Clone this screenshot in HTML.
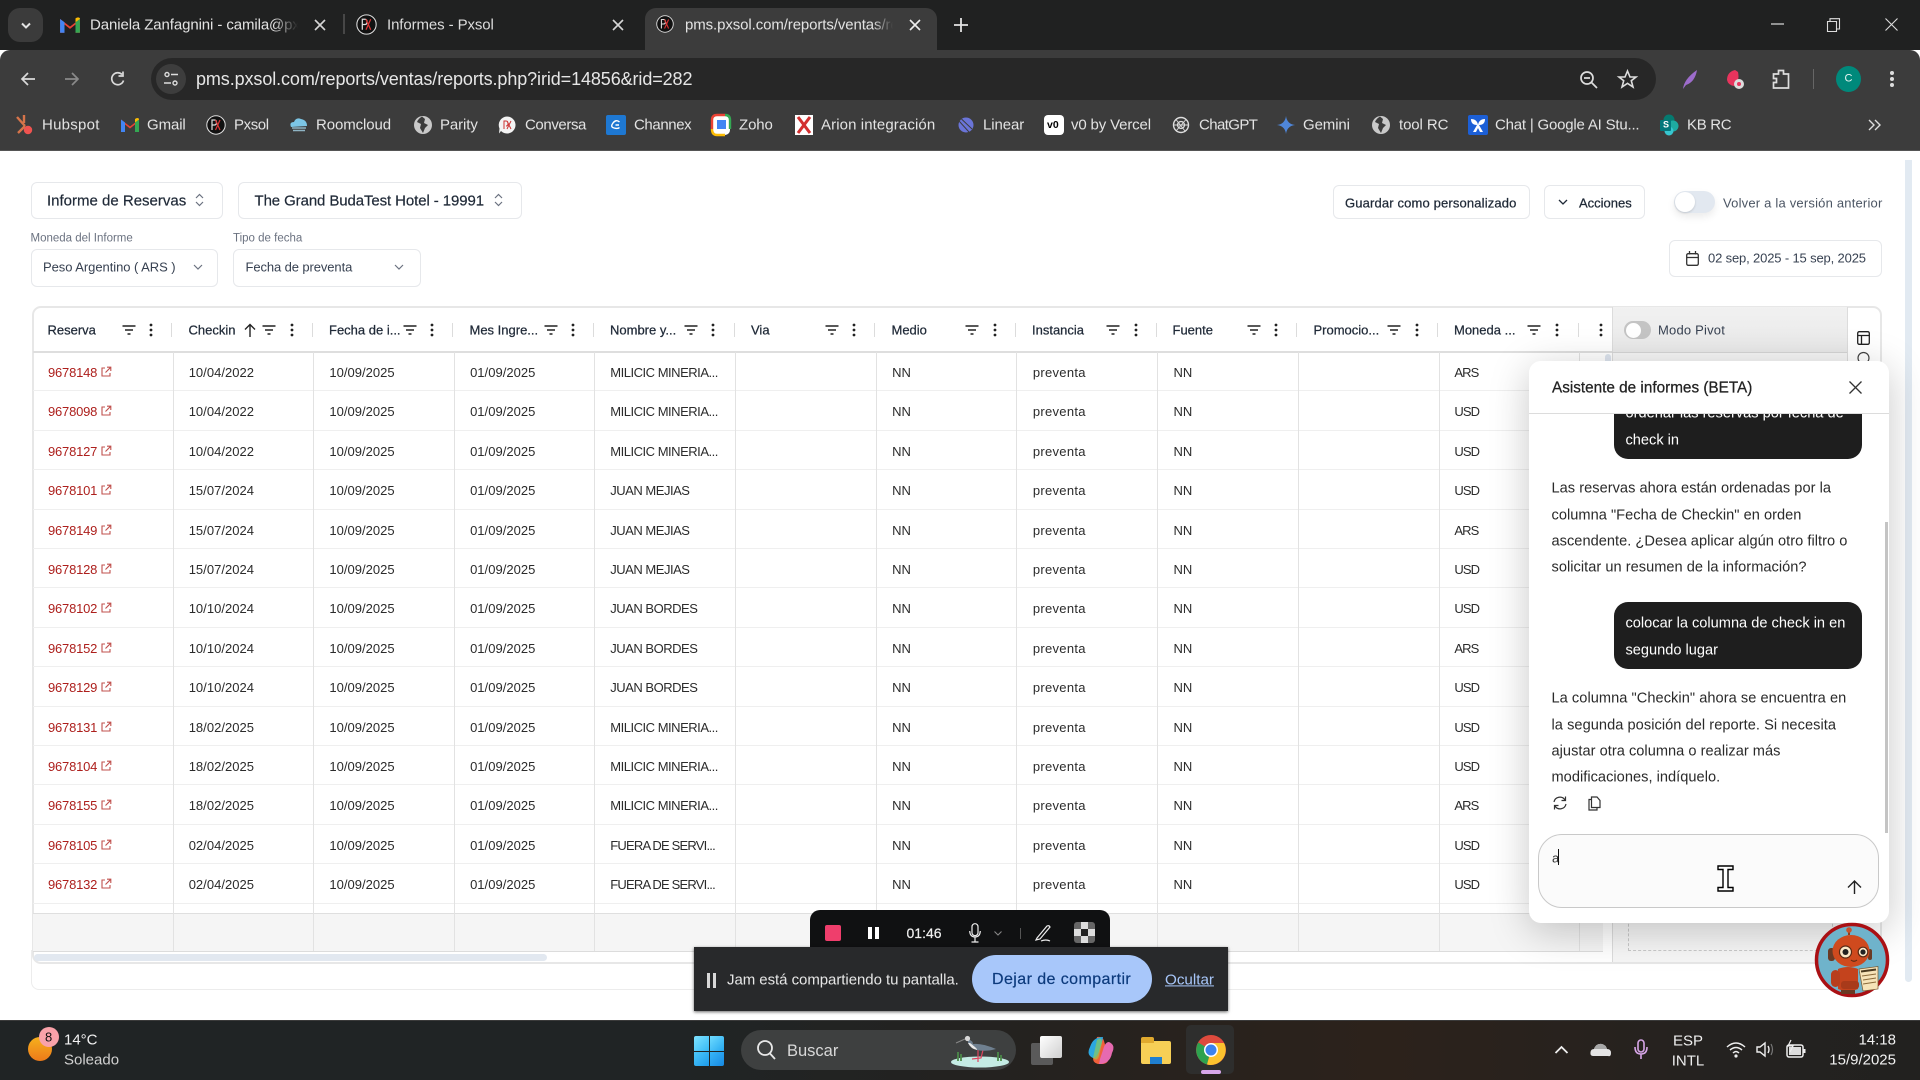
<!DOCTYPE html>
<html lang="es"><head><meta charset="utf-8"><title>pms.pxsol.com</title>
<style>
*{box-sizing:border-box}
html,body{margin:0;padding:0;width:1920px;height:1080px;overflow:hidden;background:#fff;font-family:"Liberation Sans",sans-serif}
.a{position:absolute}
.t{position:absolute;white-space:nowrap;line-height:1;transform:translateY(-50%)}
.g{color:#e3e3e3;font-size:15px;letter-spacing:-.1px}
svg{position:absolute;overflow:visible}
.box{position:absolute;background:#fff;border:1px solid #e6e8eb;border-radius:6px}
.r{position:absolute;left:33px;width:1570px;height:39.4px;border-bottom:1px solid #efefef;display:grid;grid-template-columns:repeat(11,140.7px);font-size:13px;color:#2b2b2b;line-height:41px;letter-spacing:.02px}
.r span{padding-left:15px;white-space:nowrap;overflow:hidden;display:block;position:relative}
.r span:first-child{color:#ad1f1c;letter-spacing:-.2px}
.r span:first-child svg{left:67px;top:14px}
.r span:nth-child(5){letter-spacing:-.48px;padding-left:14.5px}
.r span:nth-child(8){letter-spacing:.3px}
.r span:nth-child(11){letter-spacing:-.9px;padding-left:14.5px}
.v{position:absolute;top:352px;width:1px;height:599px;background:#e2e2e2}
.h{font-size:13px;color:#1f2937;top:330px;-webkit-text-stroke:.25px #1f2937}
.sep{position:absolute;top:323px;width:1px;height:14px;background:#dcdcdc}
.m{font-size:14.6px;color:#2a2a2a;left:1551.5px;letter-spacing:.03px}
.w{font-size:14.6px;color:#fff;left:1625.5px}
</style></head><body>
<svg width="0" height="0" style="position:absolute"><defs>
<symbol id="f" viewBox="0 0 14 10"><path d="M0.5 1H13.5M3 5H11M5.5 9H8.5" stroke="#222" stroke-width="1.4" fill="none"/></symbol>
<symbol id="d" viewBox="0 0 4 14"><circle cx="2" cy="2" r="1.4" fill="#222"/><circle cx="2" cy="7" r="1.4" fill="#222"/><circle cx="2" cy="12" r="1.4" fill="#222"/></symbol>
<symbol id="x" viewBox="0 0 12 12"><path d="M5 2H2V10H10V7M7 1.2H10.8V5M10.8 1.2L5.5 6.5" stroke="#c0504d" stroke-width="1.1" fill="none"/></symbol>
<symbol id="px" viewBox="0 0 20 20"><circle cx="10" cy="10" r="9.2" fill="#111" stroke="#ddd" stroke-width="1"/><path d="M6 15V5H8.5Q10.5 5 10.5 7.5T8.5 10H6" stroke="#ddd" fill="none" stroke-width="1.2"/><path d="M9.5 5L14 15M14 5L9.5 15" stroke="#d33" stroke-width="1.2"/></symbol>
<symbol id="gm" viewBox="0 0 20 16"><path d="M1 15V2.5L10 9.5L19 2.5V15H15V7.5L10 11.5L5 7.5V15Z" fill="#ea4335"/><path d="M1 15V2.5L5 5.5V15Z" fill="#4285f4"/><path d="M19 15V2.5L15 5.5V15Z" fill="#34a853"/><path d="M15 5.5L19 2.5V1.8Q17.5.2 15 2Z" fill="#fbbc04"/></symbol>
<symbol id="gl" viewBox="0 0 20 20"><circle cx="10" cy="10" r="9" fill="#c9c9c9"/><path d="M9 1.5Q5 4 4 7L8 9L7 13L10 18L12 13L15 10L11 8L12 4Z" fill="#3c3c3c"/></symbol>
</defs></svg>

<!-- Title bar -->
<div class="a" style="left:0;top:0;width:1920px;height:50px;background:#202121"></div>
<div class="a" style="left:8px;top:8px;width:35px;height:34px;border-radius:12px;background:#3b3b3b"></div>
<svg style="left:20px;top:22px" width="12" height="8"><path d="M2 1.5L6 5.5L10 1.5" stroke="#e3e3e3" stroke-width="2" fill="none"/></svg>
<svg style="left:59px;top:16px" width="22" height="18"><use href="#gm" width="22" height="18"/></svg>
<div class="t g" style="left:90px;top:25px;width:208px;overflow:hidden;-webkit-mask-image:linear-gradient(90deg,#000 88%,transparent)">Daniela Zanfagnini - camila@pxsol.com</div>
<svg style="left:314px;top:19px" width="12" height="12"><path d="M1 1L11 11M11 1L1 11" stroke="#d6d6d6" stroke-width="1.6"/></svg>
<div class="a" style="left:343px;top:14px;width:2px;height:20px;background:#474747"></div>
<svg style="left:356px;top:14px" width="21" height="21"><use href="#px" width="21" height="21"/></svg>
<div class="t g" style="left:387px;top:25px;color:#dcdcdc">Informes - Pxsol</div>
<svg style="left:612px;top:19px" width="12" height="12"><path d="M1 1L11 11M11 1L1 11" stroke="#d6d6d6" stroke-width="1.6"/></svg>
<div class="a" style="left:645px;top:8px;width:292px;height:42px;background:#3c3c3c;border-radius:11px 11px 0 0"></div>
<svg style="left:656px;top:15px" width="18" height="18"><use href="#px" width="18" height="18"/></svg>
<div class="t g" style="left:685px;top:25px;width:208px;overflow:hidden;-webkit-mask-image:linear-gradient(90deg,#000 90%,transparent)">pms.pxsol.com/reports/ventas/reports</div>
<svg style="left:909px;top:19px" width="12" height="12"><path d="M1 1L11 11M11 1L1 11" stroke="#eee" stroke-width="1.6"/></svg>
<svg style="left:954px;top:18px" width="14" height="14"><path d="M7 0V14M0 7H14" stroke="#e3e3e3" stroke-width="1.8"/></svg>
<svg style="left:1771px;top:23px" width="13" height="2"><path d="M0 1H13" stroke="#ddd" stroke-width="1.2"/></svg>
<svg style="left:1827px;top:18px" width="13" height="14"><path d="M.5 3.5H9.5V13.5H.5ZM3 3V.7H12.5V11H10" stroke="#ddd" fill="none" stroke-width="1.1"/></svg>
<svg style="left:1885px;top:18px" width="13" height="13"><path d="M.5.5L12.5 12.5M12.5.5L.5 12.5" stroke="#ddd" stroke-width="1.1"/></svg>

<!-- Toolbar -->
<div class="a" style="left:0;top:50px;width:1920px;height:101px;background:#3c3c3c;border-radius:10px 10px 0 0"></div>
<div class="a" style="left:0;top:150px;width:1920px;height:1px;background:#555"></div>
<svg style="left:20px;top:71px" width="16" height="16"><path d="M15 8H2M8 2L2 8L8 14" stroke="#d9d9d9" stroke-width="1.7" fill="none"/></svg>
<svg style="left:64px;top:71px" width="16" height="16"><path d="M1 8H14M8 2L14 8L8 14" stroke="#8a8a8a" stroke-width="1.7" fill="none"/></svg>
<svg style="left:110px;top:71px" width="16" height="16"><path d="M13.5 9.5A6 6 0 1 1 12 3.5M13 .5V5H8.5" stroke="#d9d9d9" stroke-width="1.7" fill="none"/></svg>
<div class="a" style="left:151px;top:58px;width:1505px;height:42px;background:#272727;border-radius:21px"></div>
<div class="a" style="left:156px;top:64px;width:30px;height:30px;background:#3d3d3d;border-radius:15px"></div>
<svg style="left:163px;top:71px" width="16" height="16"><circle cx="4" cy="3.5" r="2" fill="none" stroke="#ddd" stroke-width="1.4"/><circle cx="12" cy="12" r="2" fill="none" stroke="#ddd" stroke-width="1.4"/><path d="M8 3.5H15M1 12H8" stroke="#ddd" stroke-width="1.4"/></svg>
<div class="t" style="left:196px;top:79px;font-size:18px;color:#e6e6e6;letter-spacing:-.1px">pms.pxsol.com/reports/ventas/reports.php?irid=14856&amp;rid=282</div>
<svg style="left:1579px;top:70px" width="20" height="20"><circle cx="8" cy="8" r="6" fill="none" stroke="#ddd" stroke-width="1.7"/><path d="M12.5 12.5L18 18M5 8H11" stroke="#ddd" stroke-width="1.7"/></svg>
<svg style="left:1618px;top:70px" width="19" height="18"><path d="M9.5 1L12 7H18L13.3 10.7L15 17L9.5 13.3L4 17L5.7 10.7L1 7H7Z" stroke="#ddd" stroke-width="1.6" fill="none"/></svg>
<svg style="left:1682px;top:69px" width="16" height="21"><path d="M1 20Q2 10 15 1Q13 13 4 16Z" fill="#9d6ccb"/></svg>
<svg style="left:1726px;top:69px" width="20" height="22"><path d="M9 1Q1 3 1 11Q2 16 8 17Q14 12 12 3Z" fill="#e8345d"/><circle cx="13" cy="15" r="5" fill="#ddd"/><circle cx="13" cy="15" r="2" fill="#e8345d"/></svg>
<svg style="left:1772px;top:69px" width="19" height="21"><path d="M1.5 5H6.5V1.5H11.5V5H16.5V19H1.5V13.5H4.5V9.5H1.5Z" fill="none" stroke="#ddd" stroke-width="1.7"/></svg>
<div class="a" style="left:1813px;top:69px;width:1px;height:20px;background:#666"></div>
<div class="a" style="left:1836px;top:66px;width:25px;height:26px;border-radius:50%;background:#00897b"></div>
<div class="t" style="left:1844.5px;top:79px;font-size:11px;color:#e6f5f2">C</div>
<svg style="left:1890px;top:70px" width="4" height="18"><circle cx="2" cy="3" r="2" fill="#ddd"/><circle cx="2" cy="9" r="2" fill="#ddd"/><circle cx="2" cy="15" r="2" fill="#ddd"/></svg>

<!-- Bookmarks -->
<svg style="left:14px;top:114px" width="21" height="22"><path d="M3 3L11 12M10 1V9M11 12L4 19" stroke="#d6744a" stroke-width="2.4" fill="none"/><circle cx="14" cy="16" r="4.2" fill="#ef5350"/></svg>
<div class="t g" style="left:42px;top:125px;letter-spacing:.25px">Hubspot</div>
<svg style="left:120px;top:117px" width="20" height="16"><use href="#gm" width="20" height="16"/></svg>
<div class="t g" style="left:147px;top:125px">Gmail</div>
<svg style="left:206px;top:115px" width="20" height="20"><use href="#px" width="20" height="20"/></svg>
<div class="t g" style="left:234px;top:125px;letter-spacing:-.4px">Pxsol</div>
<svg style="left:289px;top:117px" width="20" height="16"><path d="M2 10Q0 5 5 5Q7 0 12 2Q18 3 18 9Z" fill="#7cc6e6"/><path d="M3 11H17M4 13.5H16" stroke="#8fb4c4" stroke-width="1.4"/></svg>
<div class="t g" style="left:316px;top:125px">Roomcloud</div>
<svg style="left:413px;top:115px" width="20" height="20"><use href="#gl" width="20" height="20"/></svg>
<div class="t g" style="left:440px;top:125px">Parity</div>
<svg style="left:498px;top:116px" width="18" height="18"><path d="M9 0.5A8.5 8.5 0 1 1 3 15L1 17.5L1.5 12.5A8.5 8.5 0 0 1 9 .5Z" fill="#f3f3f3"/><path d="M6 13V5H8Q10 5 10 7.5T8 10M9 5L13 13M13 5L9 13" stroke="#c33" stroke-width="1" fill="none"/></svg>
<div class="t g" style="left:525px;top:125px;letter-spacing:-.4px">Conversa</div>
<div class="a" style="left:606px;top:115px;width:20px;height:20px;background:#1e78d2;border-radius:2px"></div>
<svg style="left:606px;top:115px" width="20" height="20"><path d="M13.5 7Q10 4 7 8T8 13T13.5 12.5M9.5 10H13" stroke="#fff" stroke-width="1.4" fill="none"/></svg>
<div class="t g" style="left:634px;top:125px;letter-spacing:-.4px">Channex</div>
<svg style="left:711px;top:114px" width="20" height="22"><rect x="1" y="1" width="18" height="20" rx="5" fill="#fff"/><path d="M1 15V6Q1 1 6 1H14" stroke="#ea4335" stroke-width="2.4" fill="none"/><path d="M14 1Q19 1 19 6V15" stroke="#34a853" stroke-width="2.4" fill="none"/><path d="M1 15Q1 21 6 21H14" stroke="#fbbc04" stroke-width="2.4" fill="none"/><rect x="6" y="6" width="9" height="9" fill="#4285f4"/></svg>
<div class="t g" style="left:739px;top:125px">Zoho</div>
<div class="a" style="left:795px;top:115px;width:18px;height:20px;background:#fff"></div>
<svg style="left:795px;top:115px" width="18" height="20"><path d="M3 2L15 18M15 2L3 18" stroke="#d32f2f" stroke-width="3"/></svg>
<div class="t g" style="left:821px;top:125px;letter-spacing:.1px">Arion integración</div>
<svg style="left:958px;top:117px" width="16" height="16"><circle cx="8" cy="8" r="7.5" fill="#6a74d8"/><path d="M1 4L11 15M3.5 2L14 12" stroke="#3c3c3c" stroke-width="1"/></svg>
<div class="t g" style="left:983px;top:125px">Linear</div>
<div class="a" style="left:1044px;top:115px;width:20px;height:20px;background:#fff;border-radius:4px"></div>
<div class="t" style="left:1047px;top:125px;font-size:10.5px;font-weight:bold;color:#000">v0</div>
<div class="t g" style="left:1071px;top:125px;letter-spacing:-.15px">v0 by Vercel</div>
<svg style="left:1172px;top:116px" width="18" height="18"><circle cx="9" cy="9" r="7.5" fill="none" stroke="#ddd" stroke-width="1.4"/><circle cx="9" cy="9" r="3.5" fill="none" stroke="#ddd" stroke-width="1.2"/><path d="M4 3.5L13 15M14 3.5L4 15M1.5 9H16.5" stroke="#ddd" stroke-width=".9"/></svg>
<div class="t g" style="left:1199px;top:125px;letter-spacing:-.6px">ChatGPT</div>
<svg style="left:1277px;top:116px" width="18" height="18"><path d="M9 0Q10 8 18 9Q10 10 9 18Q8 10 0 9Q8 8 9 0Z" fill="#4f86d9"/></svg>
<div class="t g" style="left:1303px;top:125px">Gemini</div>
<svg style="left:1371px;top:115px" width="20" height="20"><use href="#gl" width="20" height="20"/></svg>
<div class="t g" style="left:1399px;top:125px">tool RC</div>
<div class="a" style="left:1468px;top:115px;width:20px;height:20px;background:#1c5fd6;border-radius:2px"></div>
<svg style="left:1468px;top:115px" width="20" height="20"><path d="M3 4Q9 4 10 10Q11 4 17 4Q17 10 11 10L15 17H12L10 13L8 17H5L9 10Q3 10 3 4Z" fill="#fff"/></svg>
<div class="t g" style="left:1495px;top:125px;letter-spacing:-.2px">Chat | Google AI Stu...</div>
<svg style="left:1659px;top:114px" width="20" height="22"><circle cx="10" cy="6" r="5.5" fill="#057a70"/><circle cx="14" cy="12" r="5.5" fill="#1eaaa0"/><circle cx="10" cy="17" r="4.5" fill="#37c6d0"/><rect x="1" y="6" width="11" height="11" rx="1" fill="#03787c"/></svg>
<div class="t" style="left:1663px;top:125px;font-size:9px;font-weight:bold;color:#fff">S</div>
<div class="t g" style="left:1687px;top:125px;letter-spacing:-.3px">KB RC</div>
<svg style="left:1868px;top:119px" width="13" height="12"><path d="M1 1L6 6L1 11M7 1L12 6L7 11" stroke="#ddd" stroke-width="1.4" fill="none"/></svg>

<!-- Page top -->
<div class="box" style="left:31px;top:182px;width:192px;height:37px"></div>
<div class="t" style="left:47px;top:200.5px;font-size:15px;color:#1f2937;-webkit-text-stroke:.2px #1f2937">Informe de Reservas</div>
<svg style="left:195px;top:193px" width="9" height="14"><path d="M1 5L4.5 1.5L8 5M1 9L4.5 12.5L8 9" stroke="#6b7280" stroke-width="1.2" fill="none"/></svg>
<div class="box" style="left:238px;top:182px;width:284px;height:37px"></div>
<div class="t" style="left:254.5px;top:200.5px;font-size:15px;letter-spacing:-.1px;color:#1f2937;-webkit-text-stroke:.2px #1f2937">The Grand BudaTest Hotel - 19991</div>
<svg style="left:494px;top:193px" width="9" height="14"><path d="M1 5L4.5 1.5L8 5M1 9L4.5 12.5L8 9" stroke="#6b7280" stroke-width="1.2" fill="none"/></svg>
<div class="t" style="left:30.5px;top:239px;font-size:11.5px;color:#6b7280">Moneda del Informe</div>
<div class="t" style="left:233px;top:239px;font-size:11.5px;color:#6b7280">Tipo de fecha</div>
<div class="box" style="left:31px;top:249px;width:187px;height:38px"></div>
<div class="t" style="left:43px;top:267px;font-size:13px;color:#374151;letter-spacing:-.05px">Peso Argentino ( ARS )</div>
<svg style="left:193px;top:264px" width="10" height="7"><path d="M1 1L5 5L9 1" stroke="#6b7280" stroke-width="1.2" fill="none"/></svg>
<div class="box" style="left:233px;top:249px;width:188px;height:38px"></div>
<div class="t" style="left:245.5px;top:267px;font-size:13px;color:#374151;letter-spacing:-.1px">Fecha de preventa</div>
<svg style="left:394px;top:264px" width="10" height="7"><path d="M1 1L5 5L9 1" stroke="#6b7280" stroke-width="1.2" fill="none"/></svg>

<div class="box" style="left:1333px;top:185px;width:197px;height:34px"></div>
<div class="t" style="left:1345px;top:202.5px;font-size:13px;letter-spacing:.15px;color:#1f2937;-webkit-text-stroke:.25px #1f2937">Guardar como personalizado</div>
<div class="box" style="left:1544px;top:185px;width:101px;height:34px"></div>
<svg style="left:1558px;top:199px" width="10" height="7"><path d="M1 1L5 5L9 1" stroke="#1f2937" stroke-width="1.3" fill="none"/></svg>
<div class="t" style="left:1579px;top:202.5px;font-size:13px;color:#1f2937;-webkit-text-stroke:.25px #1f2937">Acciones</div>
<div class="a" style="left:1674px;top:191px;width:41px;height:22px;background:#e2e8f0;border-radius:11px;box-shadow:0 4px 8px rgba(0,0,0,.08)"></div>
<div class="a" style="left:1675px;top:192px;width:20px;height:20px;background:#fff;border-radius:50%;box-shadow:0 1px 2px rgba(0,0,0,.15)"></div>
<div class="t" style="left:1723px;top:202.5px;font-size:13px;letter-spacing:.2px;color:#4b5563">Volver a la versión anterior</div>
<div class="box" style="left:1669px;top:240px;width:213px;height:37px"></div>
<svg style="left:1686px;top:251px" width="13" height="15"><rect x=".7" y="2.7" width="11.6" height="11.6" rx="1.5" fill="none" stroke="#333" stroke-width="1.3"/><path d="M.7 6.5H12.3M3.5 0V3.5M9.5 0V3.5" stroke="#333" stroke-width="1.3"/></svg>
<div class="t" style="left:1708px;top:258px;font-size:13px;letter-spacing:-.15px;color:#374151">02 sep, 2025 - 15 sep, 2025</div>

<!-- scrollbar -->
<div class="a" style="left:1905px;top:160px;width:7px;height:822px;background:#e2eaf2;border-radius:0 0 4px 4px"></div>

<!-- Outer cards -->
<div class="a" style="left:31px;top:950px;width:1850px;height:40px;border:1px solid #ececec;border-top:0;border-radius:0 0 8px 8px"></div>
<div class="a" style="left:32px;top:306px;width:1850px;height:658px;border:2px solid #e7e7e7;border-radius:9px;background:#fff"></div>

<!-- Pivot -->
<div class="a" style="left:1612px;top:307px;width:235px;height:655px;background:linear-gradient(#f1f1f1,#e9e9e9 45px,#f6f6f6 46px,#f6f6f6);border-left:1px solid #dcdcdc"></div>
<div class="a" style="left:1612px;top:352px;width:235px;height:1px;background:#d6d6d6"></div>
<div class="a" style="left:1847px;top:307px;width:1px;height:655px;background:#dcdcdc"></div>
<div class="a" style="left:1624px;top:321px;width:27px;height:18px;background:#c4c4c4;border-radius:9px"></div>
<div class="a" style="left:1625.5px;top:322.5px;width:15px;height:15px;background:#fff;border-radius:50%"></div>
<div class="t" style="left:1658px;top:330px;font-size:13px;letter-spacing:.2px;color:#374151">Modo Pivot</div>
<svg style="left:1857px;top:331px" width="13" height="14"><rect x=".7" y=".7" width="11.6" height="12.6" rx="1.5" fill="none" stroke="#222" stroke-width="1.3"/><path d="M.7 4.5H12.3M4.5 4.5V13.3" stroke="#222" stroke-width="1.3"/></svg>
<svg style="left:1857px;top:351px" width="13" height="14"><circle cx="6.5" cy="7" r="5.5" fill="none" stroke="#444" stroke-width="1.2"/></svg>
<div class="a" style="left:1628px;top:880px;width:205px;height:71px;border:1px dashed #c9c9c9;border-top:0"></div>

<!-- Table header -->
<div class="a" style="left:33px;top:351px;width:1579px;height:2px;background:#dedede"></div>
<div class="t h" style="left:47.5px">Reserva</div>
<div class="t h" style="left:188.5px">Checkin</div>
<div class="t h" style="left:329px">Fecha de i...</div>
<div class="t h" style="left:469.5px">Mes Ingre...</div>
<div class="t h" style="left:610px">Nombre y...</div>
<div class="t h" style="left:751px">Via</div>
<div class="t h" style="left:891.5px">Medio</div>
<div class="t h" style="left:1032px">Instancia</div>
<div class="t h" style="left:1172.5px">Fuente</div>
<div class="t h" style="left:1313.5px">Promocio...</div>
<div class="t h" style="left:1454px">Moneda ...</div>
<svg style="left:244px;top:323px" width="12" height="14"><path d="M6 14V1.5M1 6.5L6 1.5L11 6.5" stroke="#222" stroke-width="1.4" fill="none"/></svg>
<svg style="left:122px;top:325px" width="14" height="10"><use href="#f" width="14" height="10"/></svg>
<svg style="left:262px;top:325px" width="14" height="10"><use href="#f" width="14" height="10"/></svg>
<svg style="left:403px;top:325px" width="14" height="10"><use href="#f" width="14" height="10"/></svg>
<svg style="left:544px;top:325px" width="14" height="10"><use href="#f" width="14" height="10"/></svg>
<svg style="left:684px;top:325px" width="14" height="10"><use href="#f" width="14" height="10"/></svg>
<svg style="left:825px;top:325px" width="14" height="10"><use href="#f" width="14" height="10"/></svg>
<svg style="left:965px;top:325px" width="14" height="10"><use href="#f" width="14" height="10"/></svg>
<svg style="left:1106px;top:325px" width="14" height="10"><use href="#f" width="14" height="10"/></svg>
<svg style="left:1247px;top:325px" width="14" height="10"><use href="#f" width="14" height="10"/></svg>
<svg style="left:1387px;top:325px" width="14" height="10"><use href="#f" width="14" height="10"/></svg>
<svg style="left:1527px;top:325px" width="14" height="10"><use href="#f" width="14" height="10"/></svg>
<svg style="left:149px;top:323px" width="4" height="14"><use href="#d" width="4" height="14"/></svg>
<svg style="left:289.5px;top:323px" width="4" height="14"><use href="#d" width="4" height="14"/></svg>
<svg style="left:429.5px;top:323px" width="4" height="14"><use href="#d" width="4" height="14"/></svg>
<svg style="left:570.5px;top:323px" width="4" height="14"><use href="#d" width="4" height="14"/></svg>
<svg style="left:711px;top:323px" width="4" height="14"><use href="#d" width="4" height="14"/></svg>
<svg style="left:852px;top:323px" width="4" height="14"><use href="#d" width="4" height="14"/></svg>
<svg style="left:993px;top:323px" width="4" height="14"><use href="#d" width="4" height="14"/></svg>
<svg style="left:1133.5px;top:323px" width="4" height="14"><use href="#d" width="4" height="14"/></svg>
<svg style="left:1274px;top:323px" width="4" height="14"><use href="#d" width="4" height="14"/></svg>
<svg style="left:1415px;top:323px" width="4" height="14"><use href="#d" width="4" height="14"/></svg>
<svg style="left:1555px;top:323px" width="4" height="14"><use href="#d" width="4" height="14"/></svg>
<svg style="left:1599px;top:323px" width="4" height="14"><use href="#d" width="4" height="14"/></svg>
<div class="sep" style="left:171px"></div><div class="sep" style="left:312px"></div><div class="sep" style="left:452px"></div><div class="sep" style="left:593px"></div><div class="sep" style="left:734px"></div><div class="sep" style="left:874px"></div><div class="sep" style="left:1015px"></div><div class="sep" style="left:1156px"></div><div class="sep" style="left:1296px"></div><div class="sep" style="left:1437px"></div><div class="sep" style="left:1578px"></div>

<!-- Rows -->
<div class="r" style="top:352px"><span>9678148<svg width="12" height="12"><use href="#x"/></svg></span><span>10/04/2022</span><span>10/09/2025</span><span>01/09/2025</span><span>MILICIC MINERIA...</span><span></span><span>NN</span><span>preventa</span><span>NN</span><span></span><span>ARS</span></div>
<div class="r" style="top:391.4px"><span>9678098<svg width="12" height="12"><use href="#x"/></svg></span><span>10/04/2022</span><span>10/09/2025</span><span>01/09/2025</span><span>MILICIC MINERIA...</span><span></span><span>NN</span><span>preventa</span><span>NN</span><span></span><span>USD</span></div>
<div class="r" style="top:430.8px"><span>9678127<svg width="12" height="12"><use href="#x"/></svg></span><span>10/04/2022</span><span>10/09/2025</span><span>01/09/2025</span><span>MILICIC MINERIA...</span><span></span><span>NN</span><span>preventa</span><span>NN</span><span></span><span>USD</span></div>
<div class="r" style="top:470.2px"><span>9678101<svg width="12" height="12"><use href="#x"/></svg></span><span>15/07/2024</span><span>10/09/2025</span><span>01/09/2025</span><span>JUAN MEJIAS</span><span></span><span>NN</span><span>preventa</span><span>NN</span><span></span><span>USD</span></div>
<div class="r" style="top:509.6px"><span>9678149<svg width="12" height="12"><use href="#x"/></svg></span><span>15/07/2024</span><span>10/09/2025</span><span>01/09/2025</span><span>JUAN MEJIAS</span><span></span><span>NN</span><span>preventa</span><span>NN</span><span></span><span>ARS</span></div>
<div class="r" style="top:549px"><span>9678128<svg width="12" height="12"><use href="#x"/></svg></span><span>15/07/2024</span><span>10/09/2025</span><span>01/09/2025</span><span>JUAN MEJIAS</span><span></span><span>NN</span><span>preventa</span><span>NN</span><span></span><span>USD</span></div>
<div class="r" style="top:588.4px"><span>9678102<svg width="12" height="12"><use href="#x"/></svg></span><span>10/10/2024</span><span>10/09/2025</span><span>01/09/2025</span><span>JUAN BORDES</span><span></span><span>NN</span><span>preventa</span><span>NN</span><span></span><span>USD</span></div>
<div class="r" style="top:627.8px"><span>9678152<svg width="12" height="12"><use href="#x"/></svg></span><span>10/10/2024</span><span>10/09/2025</span><span>01/09/2025</span><span>JUAN BORDES</span><span></span><span>NN</span><span>preventa</span><span>NN</span><span></span><span>ARS</span></div>
<div class="r" style="top:667.2px"><span>9678129<svg width="12" height="12"><use href="#x"/></svg></span><span>10/10/2024</span><span>10/09/2025</span><span>01/09/2025</span><span>JUAN BORDES</span><span></span><span>NN</span><span>preventa</span><span>NN</span><span></span><span>USD</span></div>
<div class="r" style="top:706.6px"><span>9678131<svg width="12" height="12"><use href="#x"/></svg></span><span>18/02/2025</span><span>10/09/2025</span><span>01/09/2025</span><span>MILICIC MINERIA...</span><span></span><span>NN</span><span>preventa</span><span>NN</span><span></span><span>USD</span></div>
<div class="r" style="top:746px"><span>9678104<svg width="12" height="12"><use href="#x"/></svg></span><span>18/02/2025</span><span>10/09/2025</span><span>01/09/2025</span><span>MILICIC MINERIA...</span><span></span><span>NN</span><span>preventa</span><span>NN</span><span></span><span>USD</span></div>
<div class="r" style="top:785.4px"><span>9678155<svg width="12" height="12"><use href="#x"/></svg></span><span>18/02/2025</span><span>10/09/2025</span><span>01/09/2025</span><span>MILICIC MINERIA...</span><span></span><span>NN</span><span>preventa</span><span>NN</span><span></span><span>ARS</span></div>
<div class="r" style="top:824.8px"><span>9678105<svg width="12" height="12"><use href="#x"/></svg></span><span>02/04/2025</span><span>10/09/2025</span><span>01/09/2025</span><span style="letter-spacing:-.8px">FUERA DE SERVI...</span><span></span><span>NN</span><span>preventa</span><span>NN</span><span></span><span>USD</span></div>
<div class="r" style="top:864.2px"><span>9678132<svg width="12" height="12"><use href="#x"/></svg></span><span>02/04/2025</span><span>10/09/2025</span><span>01/09/2025</span><span style="letter-spacing:-.8px">FUERA DE SERVI...</span><span></span><span>NN</span><span>preventa</span><span>NN</span><span></span><span>USD</span></div>

<!-- Footer row -->
<div class="a" style="left:33px;top:913px;width:1570px;height:39px;background:#f5f5f5;border-top:1px solid #dfdfdf;border-bottom:1px solid #dcdcdc"></div>
<div class="v" style="left:172.5px"></div><div class="v" style="left:313px"></div><div class="v" style="left:453.5px"></div><div class="v" style="left:594px"></div><div class="v" style="left:735px"></div><div class="v" style="left:875.5px"></div><div class="v" style="left:1016px"></div><div class="v" style="left:1157px"></div><div class="v" style="left:1297.5px"></div><div class="v" style="left:1438.5px"></div><div class="v" style="left:1579px"></div>
<div class="a" style="left:1604px;top:353px;width:7px;height:600px;background:#fff"></div>
<div class="a" style="left:1605px;top:354px;width:6px;height:20px;background:#dde4ee;border-radius:3px"></div>
<div class="a" style="left:34px;top:954px;width:513px;height:7px;background:#e2e8f0;border-radius:4px"></div>

<!-- Chat panel -->
<div class="a" style="left:1529px;top:361px;width:360px;height:562px;background:#fff;border-radius:12px;box-shadow:0 8px 40px rgba(0,0,0,.22);overflow:hidden">
 <div class="a" style="left:85px;top:10px;width:248px;height:88px;background:#1e1e1e;border-radius:14px"></div>
 <div class="t w" style="left:96.5px;top:53px;font-size:14.6px;color:#fff">ordenar las reservas por fecha de</div>
 <div class="t w" style="left:96.5px;top:80px;font-size:14.6px;color:#fff">check in</div>
 <div class="a" style="left:0;top:0;width:360px;height:53px;background:#fff;border-bottom:1px solid #dcdcdc"></div>
</div>
<div class="t" style="left:1552px;top:388px;font-size:15.3px;color:#222;-webkit-text-stroke:.25px #222">Asistente de informes (BETA)</div>
<svg style="left:1849px;top:381px" width="13" height="13"><path d="M.5.5L12.5 12.5M12.5.5L.5 12.5" stroke="#333" stroke-width="1.3"/></svg>
<div class="t m" style="top:488.5px">Las reservas ahora están ordenadas por la</div>
<div class="t m" style="top:516px">columna "Fecha de Checkin" en orden</div>
<div class="t m" style="top:542px">ascendente. ¿Desea aplicar algún otro filtro o</div>
<div class="t m" style="top:568px">solicitar un resumen de la información?</div>
<div class="a" style="left:1614px;top:602px;width:248px;height:67px;background:#1e1e1e;border-radius:14px"></div>
<div class="t w" style="top:624px">colocar la columna de check in en</div>
<div class="t w" style="top:651px">segundo lugar</div>
<div class="t m" style="top:699px;letter-spacing:.05px">La columna "Checkin" ahora se encuentra en</div>
<div class="t m" style="top:726px;letter-spacing:.05px">la segunda posición del reporte. Si necesita</div>
<div class="t m" style="top:752px">ajustar otra columna o realizar más</div>
<div class="t m" style="top:778px">modificaciones, indíquelo.</div>
<svg style="left:1553px;top:796px" width="14" height="14"><path d="M1 6A6 6 0 0 1 12 4M13 8A6 6 0 0 1 2 10M12.5 .5V4.5H8.5M1.5 13.5V9.5H5.5" stroke="#333" stroke-width="1.2" fill="none"/></svg>
<svg style="left:1588px;top:796px" width="13" height="15"><path d="M3.5 3.5H1V14H9V11.5M3.5 1V11.5H12V4.5L9 1Z" stroke="#333" stroke-width="1.2" fill="none"/></svg>
<div class="a" style="left:1885px;top:522px;width:3px;height:311px;background:#c4c4c4"></div>
<div class="a" style="left:1538px;top:834px;width:341px;height:74px;background:#fbfbfb;border:1px solid #c9c9c9;border-radius:24px"></div>
<div class="t" style="left:1552px;top:858px;font-size:13px;color:#333">a</div>
<div class="a" style="left:1558px;top:849px;width:1px;height:16px;background:#111"></div>
<svg style="left:1847px;top:880px" width="15" height="14"><path d="M7.5 14V1M1 7.5L7.5 1L14 7.5" stroke="#222" stroke-width="1.4" fill="none"/></svg>
<svg style="left:1717px;top:865px" width="17" height="27"><path d="M1 1H16V4.5H11V22.5H16V26H1V22.5H6V4.5H1Z" fill="#fff" stroke="#000" stroke-width="1.4"/></svg>

<!-- Robot -->
<svg style="left:1814px;top:923px" width="76" height="76" viewBox="0 0 76 76">
<circle cx="38" cy="37" r="35.5" fill="#6fb3cb" stroke="#aa1014" stroke-width="3.5"/>
<path d="M35 12V8" stroke="#8a4020" stroke-width="2"/><circle cx="35" cy="7" r="2.8" fill="#c9532c"/>
<rect x="14" y="25" width="7" height="13" rx="3" fill="#6a3a24"/><rect x="54" y="26" width="4" height="11" rx="2" fill="#6a3a24"/>
<ellipse cx="37" cy="28" rx="18.5" ry="16" fill="#cf4a1e"/>
<circle cx="31.5" cy="29" r="6" fill="#fbe8c8" stroke="#5a2a14" stroke-width="1.2"/><circle cx="49" cy="29" r="4.8" fill="#fbe8c8" stroke="#5a2a14" stroke-width="1.2"/>
<circle cx="31.5" cy="29" r="3" fill="#222"/><circle cx="49" cy="29" r="2.6" fill="#222"/>
<path d="M37 37Q40 39.5 43 37" stroke="#5a2a14" stroke-width="1.1" fill="none"/>
<path d="M24 46Q34 42 44 46V66Q34 70 24 66Z" fill="#c4431d"/><rect x="17" y="47" width="9" height="17" rx="4.5" fill="#b83e1c"/><rect x="27" y="58" width="18" height="8" rx="3" fill="#a83a1a"/>
<rect x="27" y="67" width="14" height="4" fill="#6a3a24"/>
<path d="M45 46L64 43.5L64 66L49 68Z" fill="#f6e3b8" stroke="#7a5a30" stroke-width=".7"/>
<path d="M47 48.5L62 46.5" stroke="#4a3a20" stroke-width="2"/><path d="M48 53L62 51M49 57L62 55M49 61L62 59" stroke="#8a6a3a" stroke-width=".9"/>
</svg>

<!-- Recorder -->
<div class="a" style="left:810px;top:910px;width:300px;height:38px;background:#101112;border-radius:10px 10px 0 0"></div>
<div class="a" style="left:825px;top:925px;width:16px;height:16px;background:#ef3e6c;border-radius:2px"></div>
<div class="a" style="left:868px;top:927px;width:3.5px;height:12px;background:#fff"></div><div class="a" style="left:875px;top:927px;width:3.5px;height:12px;background:#fff"></div>
<div class="t" style="left:906.5px;top:932.5px;font-size:14px;color:#f0f0f0;-webkit-text-stroke:.2px #f0f0f0">01:46</div>
<svg style="left:969px;top:923px" width="12" height="20"><rect x="3" y=".7" width="6" height="12" rx="3" fill="none" stroke="#eee" stroke-width="1.2"/><path d="M.7 8Q1 14 6 14T11.3 8M6 14V19M2.5 19H9.5" stroke="#eee" stroke-width="1.2" fill="none"/></svg>
<svg style="left:994px;top:931px" width="8" height="5"><path d="M.5.5L4 4L7.5.5" stroke="#888" stroke-width="1.1" fill="none"/></svg>
<div class="a" style="left:1020px;top:928px;width:1px;height:11px;background:#555"></div>
<svg style="left:1035px;top:924px" width="17" height="19"><path d="M2 14L12 2Q14 1 15 3L5 15L1 16ZM6 17Q11 15 15 17" stroke="#eee" stroke-width="1.2" fill="none"/></svg>
<svg style="left:1074px;top:922px" width="21" height="21"><rect width="21" height="21" rx="3" fill="#666"/><path d="M7 0H14V7H21V14H14V21H7V14H0V7H7Z" fill="#ddd"/><rect x="7" y="7" width="7" height="7" fill="#222"/></svg>

<!-- Jam bar -->
<div class="a" style="left:694px;top:947px;width:534px;height:64px;background:#28292b;box-shadow:0 1px 3px rgba(0,0,0,.6)"></div>
<div class="a" style="left:707px;top:973px;width:3px;height:15px;background:#d8d8d8"></div><div class="a" style="left:713px;top:973px;width:3px;height:15px;background:#d8d8d8"></div>
<div class="t" style="left:727px;top:980px;font-size:15px;color:#e6e6e6;letter-spacing:-.05px">Jam está compartiendo tu pantalla.</div>
<div class="a" style="left:972px;top:955px;width:180px;height:48px;background:#a8c7fa;border-radius:24px"></div>
<div class="t" style="left:992px;top:980px;font-size:16px;letter-spacing:.42px;color:#0c3a7c;-webkit-text-stroke:.2px #0c3a7c">Dejar de compartir</div>
<div class="t" style="left:1165px;top:980px;font-size:15.2px;color:#a8c7fa;text-decoration:underline">Ocultar</div>

<!-- Taskbar -->
<div class="a" style="left:0;top:1020px;width:1920px;height:60px;background:linear-gradient(90deg,#202425 0,#202425 35%,#232220 50%,#2c221b 72%,#242220 90%,#22211f 100%);border-top:1px solid #3a3a3a"></div>
<div class="a" style="left:28px;top:1037px;width:24px;height:24px;background:linear-gradient(#f6b01d,#ec7a1a);border-radius:50%"></div>
<div class="a" style="left:39px;top:1027px;width:20px;height:20px;background:#f9a2a9;border-radius:50%"></div>
<div class="t" style="left:45px;top:1037px;font-size:13px;color:#111">8</div>
<div class="t" style="left:64px;top:1040px;font-size:15px;color:#f2f2f2">14°C</div>
<div class="t" style="left:64px;top:1060px;font-size:15px;color:#d0d0d0">Soleado</div>
<div class="a" style="left:694px;top:1036px;width:14.5px;height:14.5px;background:linear-gradient(135deg,#7fe3ff,#35b8f5);border-radius:2px 0 0 0"></div>
<div class="a" style="left:709.5px;top:1036px;width:14.5px;height:14.5px;background:linear-gradient(135deg,#6fdcff,#26a8f0);border-radius:0 2px 0 0"></div>
<div class="a" style="left:694px;top:1051.5px;width:14.5px;height:14.5px;background:linear-gradient(135deg,#4cc8fb,#1c9bea);border-radius:0 0 0 2px"></div>
<div class="a" style="left:709.5px;top:1051.5px;width:14.5px;height:14.5px;background:linear-gradient(135deg,#38b6f8,#1689e2);border-radius:0 0 2px 0"></div>
<div class="a" style="left:741px;top:1030px;width:275px;height:40px;background:#3e4040;border-radius:20px"></div>
<svg style="left:757px;top:1040px" width="19" height="20"><circle cx="8" cy="8" r="7" fill="none" stroke="#e8e8e8" stroke-width="1.8"/><path d="M13 13.5L18 19" stroke="#e8e8e8" stroke-width="1.8"/></svg>
<div class="t" style="left:787px;top:1051px;font-size:16.5px;color:#d8d8d8">Buscar</div>
<svg style="left:950px;top:1034px" width="60" height="36"><ellipse cx="30" cy="28" rx="29" ry="5.5" fill="#c4ebe4"/><path d="M8 27V18M11 27V20M48 27V18M51 27V21" stroke="#4c8a4a" stroke-width="1.8"/><path d="M28 16V28M33 16L31 24L22 25" stroke="#e0445e" stroke-width="1.2" fill="none"/><path d="M18 5Q23 7 23 10Q32 9 46 15Q36 18 27 16Q21 14 18 9Z" fill="#6f8090"/><path d="M20 9Q28 15 27 16Q21 15 18 9Z" fill="#e8e8e8"/><circle cx="17.5" cy="4.5" r="2.6" fill="#d8d8d8"/><path d="M15 5L6 9" stroke="#888" stroke-width="1"/></svg>
<div class="a" style="left:1031px;top:1043px;width:22px;height:22px;background:#5a5a5a;border-radius:2px"></div>
<div class="a" style="left:1040px;top:1036px;width:22px;height:22px;background:linear-gradient(135deg,#fff,#cfcfcf);border-radius:2px"></div>
<svg style="left:1087px;top:1036px" width="28" height="29"><path d="M10 1Q16 0 17 5L21 19Q23 27 16 28H11Q4 26 7 19Z" fill="#f0603a"/><path d="M16 1Q6 1 3 11Q-1 19 6 22Q10 22 12 15L15 6Z" fill="#2ba7e0"/><path d="M12 28Q23 28 25 17Q29 9 22 6Q18 6 16 14L13 23Z" fill="#e66ab0"/><path d="M10 4Q15 0 15 7L12 20Q10 26 6 22" fill="#9ad14b" opacity=".6"/></svg>
<div class="a" style="left:1141px;top:1041px;width:30px;height:23px;background:#f7cf56;border-radius:2px"></div>
<div class="a" style="left:1141px;top:1037px;width:13px;height:6px;background:#e0a92e;border-radius:2px 2px 0 0"></div>
<div class="a" style="left:1150px;top:1057px;width:12px;height:7px;background:#1f7fd0"></div>
<div class="a" style="left:1186px;top:1025px;width:48px;height:49px;background:#2e2e2d;border-radius:5px"></div>
<svg style="left:1196px;top:1035px" width="30" height="30" viewBox="0 0 30 30"><circle cx="15" cy="15" r="15" fill="#dd4a3d"/><path d="M15 15L2.2 7.5A15 15 0 0 0 11 29.5Z" fill="#2da24f"/><path d="M15 8H28A15 15 0 0 1 11 29.5L15 15Z" fill="#fbc22e"/><path d="M2.2 7.5A15 15 0 0 1 28 8H15Z" fill="#dd4a3d"/><circle cx="15" cy="15" r="7" fill="#fff"/><circle cx="15" cy="15" r="5.5" fill="#3b82ee"/></svg>
<div class="a" style="left:1201px;top:1070px;width:20px;height:4px;background:#d7a6e8;border-radius:2px"></div>

<!-- Tray -->
<svg style="left:1554px;top:1045px" width="15" height="10"><path d="M1.5 8L7.5 2L13.5 8" stroke="#eee" stroke-width="1.8" fill="none"/></svg>
<svg style="left:1590px;top:1042px" width="22" height="15"><path d="M3 14Q0 14 .5 10Q1 7 4 7Q6 1 12 2Q16 3 17 7Q21 7 21 11T18 14Z" fill="#e4e4e4"/><path d="M4 7Q6 1 12 2Q16 3 17 7Z" fill="#a8a8a8"/></svg>
<svg style="left:1634px;top:1039px" width="14" height="21"><rect x="4" y="1" width="6" height="12" rx="3" fill="none" stroke="#d7a6e8" stroke-width="1.6"/><path d="M1 8Q1 15 7 15T13 8M7 15V20" stroke="#d7a6e8" stroke-width="1.6" fill="none"/></svg>
<div class="t" style="left:1688px;top:1041px;font-size:15px;color:#eee;transform:translate(-50%,-50%)">ESP</div>
<div class="t" style="left:1688px;top:1061px;font-size:15px;color:#eee;transform:translate(-50%,-50%)">INTL</div>
<svg style="left:1726px;top:1041px" width="20" height="17"><path d="M1 6Q10-2 19 6M4 9Q10 4 16 9M7 12Q10 9 13 12" stroke="#eee" stroke-width="1.5" fill="none"/><circle cx="10" cy="15" r="1.6" fill="#eee"/></svg>
<svg style="left:1756px;top:1041px" width="20" height="17"><path d="M1 6H4L9 2V15L4 11H1Z" stroke="#eee" stroke-width="1.4" fill="none"/><path d="M12 5Q14 8.5 12 12" stroke="#eee" stroke-width="1.4" fill="none"/><path d="M15 3Q18 8.5 15 14" stroke="#777" stroke-width="1.2" fill="none"/></svg>
<svg style="left:1786px;top:1040px" width="20" height="19"><rect x="1" y="5" width="16" height="12" rx="2" fill="none" stroke="#eee" stroke-width="1.5"/><rect x="3" y="7" width="12" height="8" fill="#ddd"/><rect x="17.5" y="9" width="2" height="4" fill="#eee"/><path d="M5 0L2 6H7L4 12" stroke="#eee" stroke-width="1.2" fill="none"/></svg>
<div class="t" style="right:24px;top:1040px;font-size:15px;color:#f2f2f2">14:18</div>
<div class="t" style="right:24px;top:1060px;font-size:15px;color:#f2f2f2">15/9/2025</div>
</body></html>
